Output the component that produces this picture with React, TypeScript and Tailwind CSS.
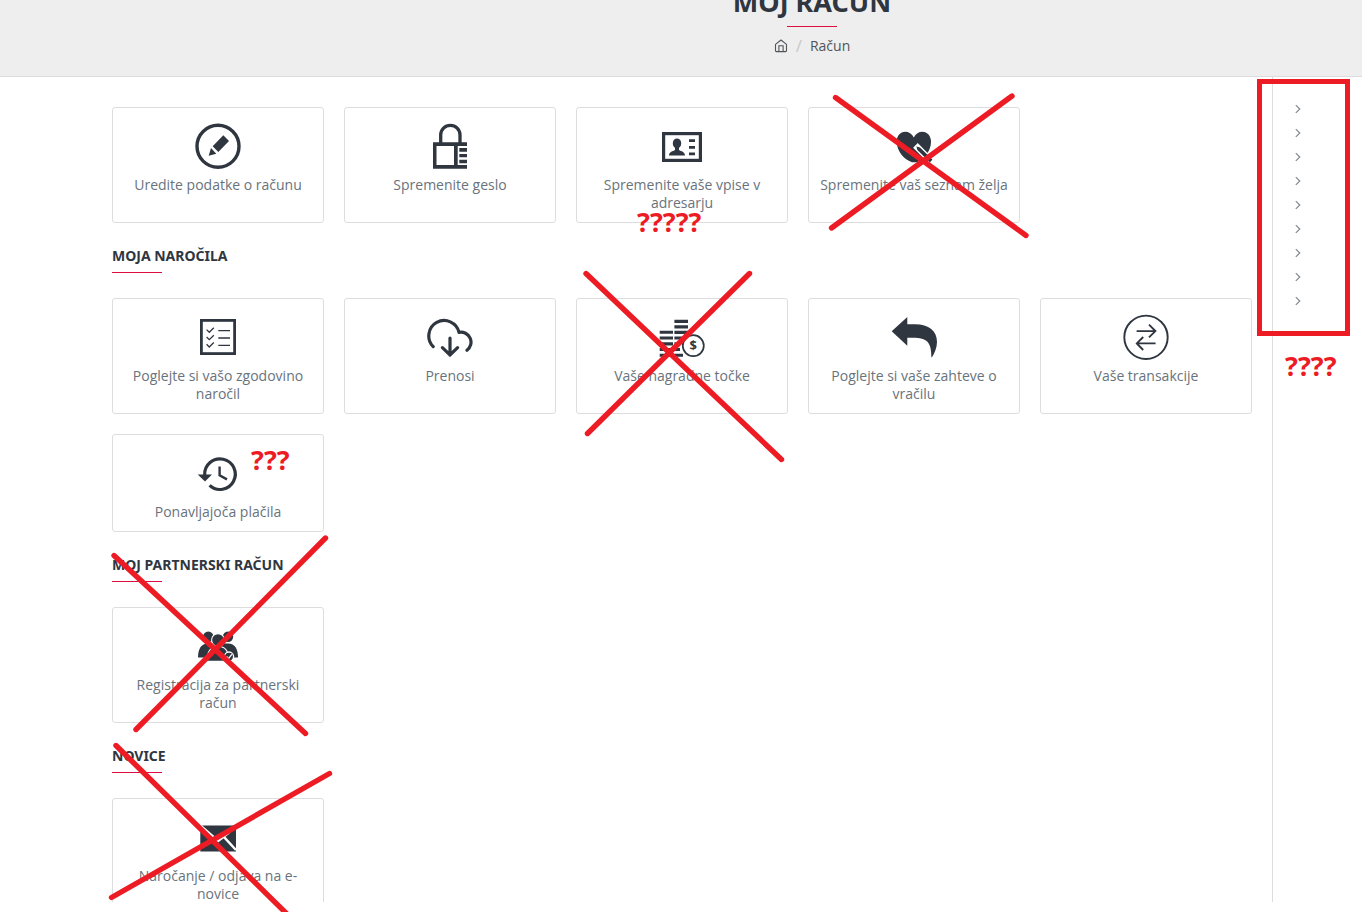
import React from "react";

const INK = "#2f3640";
const MARK = "#ed1c24";

function Icon({ children }: { children: React.ReactNode }) {
  return (
    <svg viewBox="0 0 46 46" className="size-[46px]" fill={INK} aria-hidden="true">
      {children}
    </svg>
  );
}

const EditIcon = () => (
  <Icon>
    <circle cx="23" cy="23.3" r="21" fill="none" stroke={INK} strokeWidth="3.4" />
    <path d="M28.3 12.3L34 18L23.3 29L17.7 23.3ZM16 25L21.3 30.7L13.7 32.7Z" />
  </Icon>
);

const LockIcon = () => (
  <Icon>
    <path d="M13.7 20.5V12a9.65 9.65 0 0 1 19.3 0v8.5" fill="none" stroke={INK} strokeWidth="3.3" />
    <path
      fillRule="evenodd"
      d="M6 19.3H40V23H30.7V42H40V45.7H6ZM9.5 23V42H27V23Z"
    />
    <path d="M32.3 25H40V28.7H32.3ZM32.3 31H40V34.3H32.3ZM32.3 36.7H40V40.2H32.3Z" />
  </Icon>
);

const AddressIcon = () => (
  <Icon>
    <rect x="4.6" y="10.6" width="36.8" height="26.8" fill="none" stroke={INK} strokeWidth="3.2" />
    <ellipse cx="18" cy="20.4" rx="4.2" ry="5" />
    <path d="M16 23H20V27C22 28.4 26 28.6 26 32.5H10C10 28.6 14 28.4 16 27Z" />
    <path d="M30 16.3H36V19H30ZM30 23H36V25.8H30ZM30 29.4H36V32.2H30Z" />
  </Icon>
);

const WishIcon = () => (
  <Icon>
    <path d="M22.8 14.6C21 10.6 17.6 8.7 14.2 8.7C9.2 8.7 5.7 13 5.7 18.6C5.7 29 14 37 21 39.3H26C34 35 40 28 40 18.6C40 13 36.4 8.7 31.4 8.7C28 8.7 24.6 10.6 22.8 14.6Z" />
    <path d="M24.4 22.4L40.5 38.5" stroke="#fff" strokeWidth="6.5" />
    <path d="M25.4 23.4L29 24.6L41.4 36.6L39 39.4L26.4 27Z" />
  </Icon>
);

const HistoryListIcon = () => (
  <Icon>
    <rect x="6.4" y="6.4" width="33.2" height="33.2" fill="none" stroke={INK} strokeWidth="2.8" />
    <g fill="none" stroke={INK} strokeWidth="1.3">
      <path d="M11.6 15.6L14.3 18.3L18.8 13.8M11.6 23L14.3 25.7L18.8 21.2M11.6 30.3L14.3 33L18.8 28.5" />
      <path d="M23.3 16.6H35M23.3 24H35M23.3 31.4H35" />
    </g>
  </Icon>
);

const DownloadIcon = () => (
  <Icon>
    <g fill="none" stroke={INK} strokeWidth="3.2" strokeLinecap="round">
      <path d="M6.2 32.6A15.3 15.3 0 1 1 32 18.4A10 10 0 0 1 40 36.2" strokeLinejoin="round" />
      <path d="M23 24V41M15.4 33.6L23 41L30.6 33.6" />
    </g>
  </Icon>
);

const CoinsIcon = () => (
  <Icon>
    <path d="M.7 16.7H14V19.8H.7ZM.7 22.4H14V25.6H.7ZM.7 28.2H14V31.4H.7ZM.7 34H14V37.1H.7ZM.7 39.7H14V42.8H.7Z" />
    <path d="M15.4 5.7H29V9H15.4ZM15.4 11.3H29V14.6H15.4ZM15.4 16.8H29V20H15.4ZM15.4 22.4H26V25.6H15.4ZM15.4 28.2H21V31.4H15.4ZM15.4 34H21V37.1H15.4ZM15.4 39.7H24V42.8H15.4Z" />
    <circle cx="34.3" cy="31.7" r="13" fill="#fff" />
    <circle cx="34.3" cy="31.7" r="10.5" fill="#fff" stroke={INK} strokeWidth="1.7" />
    <text
      x="34.3"
      y="36.4"
      textAnchor="middle"
      className="font-['Noto_Sans',sans-serif] text-[13px] font-bold"
    >
      $
    </text>
  </Icon>
);

const ReturnIcon = () => (
  <Icon>
    <path d="M.7 17.3L16.3 3V10.3H24C38 10.3 46 17 46 28C46 34 43.5 39 41 43.2H40.4C40.4 28 36 23.7 22 23.7H16.3V31.7Z" />
  </Icon>
);

const TransferIcon = () => (
  <Icon>
    <g fill="none" stroke={INK} strokeWidth="1.9">
      <circle cx="23" cy="23.3" r="21.7" />
      <path d="M13.6 17.1H32M26 10.6L32.4 17.1L26 23.4M32.6 29.4H14M20.2 23L13.8 29.4L20.2 36" />
    </g>
  </Icon>
);

const RecurringIcon = () => (
  <Icon>
    <path d="M9.7 25A15.3 15.3 0 1 1 14.6 35.4" fill="none" stroke={INK} strokeWidth="3.2" />
    <path d="M2.7 24.6H17L10 31.4Z" />
    <path d="M24.6 16.6V25.4L32 29.4" fill="none" stroke={INK} strokeWidth="2.4" />
  </Icon>
);

const PartnersIcon = () => (
  <Icon>
    <circle cx="13.3" cy="13.7" r="5.2" />
    <circle cx="33" cy="13.7" r="5.2" />
    <path d="M3 34.5C3 26 6 20.4 13 20.4H33C40 20.4 43 26 43 34.5Z" />
    <g stroke="#fff" strokeWidth="1.1">
      <circle cx="23" cy="17" r="6.4" />
      <path d="M12 38.4C12 29 14.6 23.2 23 23.2S34 29 34 38.4Z" />
    </g>
    <circle cx="34" cy="33.6" r="4.6" stroke="#fff" strokeWidth="1.3" />
    <path d="M31.6 33.4L33.6 35.6L36.8 31.4" fill="none" stroke="#fff" strokeWidth="1.3" />
  </Icon>
);

const MailIcon = () => (
  <Icon>
    <path d="M5.3 11.4H41V37.4H5.3Z" />
    <path d="M5.3 11.4L23.2 27L34 18.6M28.4 22.4L41 36" fill="none" stroke="#fff" strokeWidth="2.4" />
  </Icon>
);

type Item = { label: string; icon: React.ReactNode };

const account: Item[] = [
  { label: "Uredite podatke o računu", icon: <EditIcon /> },
  { label: "Spremenite geslo", icon: <LockIcon /> },
  { label: "Spremenite vaše vpise v adresarju", icon: <AddressIcon /> },
  { label: "Spremenite vaš seznam želja", icon: <WishIcon /> },
];

const sections: { title: string; items: Item[] }[] = [
  {
    title: "Moja naročila",
    items: [
      { label: "Poglejte si vašo zgodovino naročil", icon: <HistoryListIcon /> },
      { label: "Prenosi", icon: <DownloadIcon /> },
      { label: "Vaše nagradne točke", icon: <CoinsIcon /> },
      { label: "Poglejte si vaše zahteve o vračilu", icon: <ReturnIcon /> },
      { label: "Vaše transakcije", icon: <TransferIcon /> },
      { label: "Ponavljajoča plačila", icon: <RecurringIcon /> },
    ],
  },
  {
    title: "Moj partnerski račun",
    items: [{ label: "Registracija za partnerski račun", icon: <PartnersIcon /> }],
  },
  {
    title: "Novice",
    items: [{ label: "Naročanje / odjava na e-novice", icon: <MailIcon /> }],
  },
];

function CardGrid({ items }: { items: Item[] }) {
  return (
    <ul className="grid grid-cols-5 gap-5">
      {items.map((item) => (
        <li key={item.label} className="flex">
          <a
            href="#"
            className="flex flex-1 flex-col items-center rounded-[3px] border border-[#dddddd] px-[10px] pt-[15px] pb-[10px] text-center font-['Open_Sans',sans-serif] text-[14px] leading-[18px] text-[#69737c]"
          >
            {item.icon}
            <span className="mt-[7px]">{item.label}</span>
          </a>
        </li>
      ))}
    </ul>
  );
}

function Section({ title, items }: { title: string; items: Item[] }) {
  return (
    <section>
      <h2 className="mt-[23px] text-[14px] leading-5 font-bold text-[#2f3640] uppercase">{title}</h2>
      <div className="mt-[6px] mb-[25px] h-px w-[50px] bg-[#dd0e3f]" />
      <CardGrid items={items} />
    </section>
  );
}

function Annotations() {
  return (
    <div className="pointer-events-none absolute inset-0 font-['Open_Sans',sans-serif] text-[27px] leading-8 font-bold text-[#ed1c24]">
      <svg className="absolute top-0 left-0 h-full w-full" aria-hidden="true">
        <g fill="none" stroke={MARK} strokeWidth="5.4" strokeLinecap="round">
          <path d="M835.5 97.5L1026 235.5M1012 96L831.5 228" />
          <path d="M586 273.5L781.5 459.5M749.5 273.5L587.5 433.5" />
          <path d="M114 555.5L305.5 733.5M325.5 538L136 729.5" />
          <path d="M116 745.5L290 917M329.5 773.5L111.5 897.5" />
        </g>
      </svg>
      <div className="absolute top-[79px] left-[1257px] h-[257px] w-[93px] border-5 border-[#ed1c24]" />
      <span className="absolute top-[206px] left-[637px]">?????</span>
      <span className="absolute top-[350px] left-[1285px]">????</span>
      <span className="absolute top-[444px] left-[251px]">???</span>
    </div>
  );
}

export default function App() {
  return (
    <div className="relative flex h-screen flex-col overflow-hidden bg-white pb-[10px] font-['Noto_Sans',sans-serif]">
      <header className="flex h-[77px] shrink-0 flex-col items-center justify-end overflow-hidden border-b border-[#dddddd] bg-[#eeeeee] pb-5 pl-[262px]">
        <h1 className="text-[27px] leading-8 font-bold text-[#2f3640] uppercase">Moj račun</h1>
        <div className="mt-2 mb-[9px] h-px w-[50px] shrink-0 bg-[#dd0e3f]" />
        <nav className="flex items-center gap-2 font-['Open_Sans',sans-serif] text-[14px] leading-5 text-[#50555a]">
          <a href="#" aria-label="Domov">
            <svg viewBox="0 0 14 14" className="size-[14px]" fill="none" stroke="#50555a" strokeWidth="1.1">
              <path d="M1.5 5.4L7 1L12.5 5.4V11.6Q12.5 12.6 11.5 12.6H2.5Q1.5 12.6 1.5 11.6Z" strokeLinejoin="round" />
              <path d="M4.9 12.4V6.8H9.1V12.4" />
            </svg>
          </a>
          <span className="text-[17px] text-[#c8c8c8]">/</span>
          <a href="#">Račun</a>
        </nav>
      </header>

      <div className="flex min-h-0 flex-1 overflow-hidden pl-28">
        <main className="flex-1 pt-[30px] pr-5">
          <CardGrid items={account} />
          {sections.map((s) => (
            <Section key={s.title} title={s.title} items={s.items} />
          ))}
        </main>
        <aside className="w-[90px] border-l border-[#dddddd] pt-5 pl-5">
          <ul>
            {Array.from({ length: 9 }, (_, i) => (
              <li key={i}>
                <a href="#" aria-label={`Povezava ${i + 1}`} className="flex h-6 items-center">
                  <svg viewBox="0 0 10 10" className="size-[10px]" fill="none" stroke="#7b848c" strokeWidth="1.1">
                    <path d="M2.8 1.2L6.8 5L2.8 8.8" />
                  </svg>
                </a>
              </li>
            ))}
          </ul>
        </aside>
      </div>

      <Annotations />
    </div>
  );
}
